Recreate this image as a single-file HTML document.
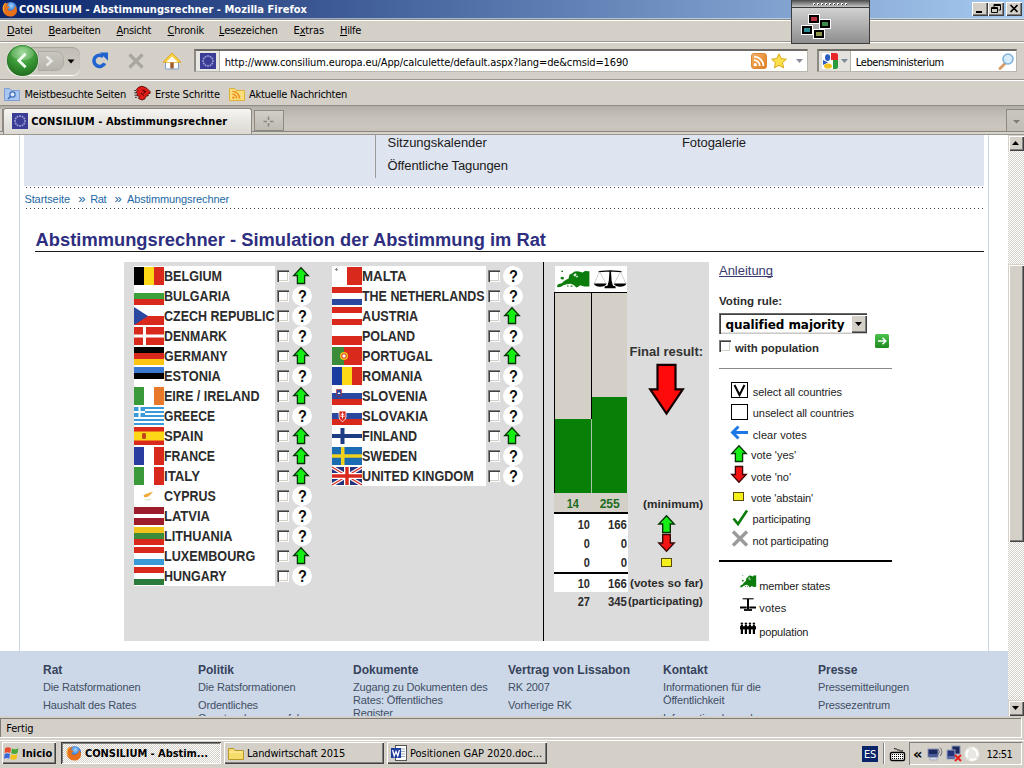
<!DOCTYPE html>
<html lang="de"><head><meta charset="utf-8"><title>CONSILIUM - Abstimmungsrechner - Mozilla Firefox</title>
<style>
*{box-sizing:border-box;margin:0;padding:0}
html,body{width:1024px;height:768px;overflow:hidden;background:#d4d0c8}
body{position:relative;font-family:"Liberation Sans",sans-serif;font-size:12px;color:#000}
.t{position:absolute;white-space:pre;line-height:1}
u{text-decoration:underline}
*{text-decoration-skip-ink:none}
svg{display:block;overflow:visible}
</style></head><body>
<div style="position:absolute;left:0px;top:135px;width:1008px;height:581px;background:#fff"></div>
<div style="position:absolute;left:19px;top:135px;width:1px;height:516px;background:#c9d6e6"></div>
<div style="position:absolute;left:988px;top:135px;width:1px;height:516px;background:#c9d6e6"></div>
<div style="position:absolute;left:24px;top:135px;width:960px;height:51px;background:#dfe5f0"></div>
<div style="position:absolute;left:375px;top:135px;width:1px;height:43px;background:#9c9c9c"></div>
<span class="t" style="left:387.60px;top:135.60px;font-family:'Liberation Sans',sans-serif;font-size:13px;font-weight:400;color:#1a1a1a;letter-spacing:-0.033px;">Sitzungskalender</span>
<span class="t" style="left:387.60px;top:159.40px;font-family:'Liberation Sans',sans-serif;font-size:13px;font-weight:400;color:#1a1a1a;letter-spacing:-0.110px;">Öffentliche Tagungen</span>
<span class="t" style="left:682.00px;top:135.60px;font-family:'Liberation Sans',sans-serif;font-size:13px;font-weight:400;color:#1a1a1a;letter-spacing:-0.095px;">Fotogalerie</span>
<div style="position:absolute;left:26px;top:187px;width:957px;height:1px;background-image:repeating-linear-gradient(90deg,#3a3a3a 0 1px,transparent 1px 4px)"></div>
<div style="position:absolute;left:26px;top:208px;width:957px;height:1px;background-image:repeating-linear-gradient(90deg,#3a3a3a 0 1px,transparent 1px 4px)"></div>
<span class="t" style="left:24.40px;top:193.50px;font-family:'Liberation Sans',sans-serif;font-size:11px;font-weight:400;color:#2268a6;letter-spacing:-0.087px;">Startseite</span>
<span class="t" style="left:78.30px;top:191.50px;font-family:'Liberation Sans',sans-serif;font-size:13px;font-weight:400;color:#2268a6;">»</span>
<span class="t" style="left:90.20px;top:193.50px;font-family:'Liberation Sans',sans-serif;font-size:11px;font-weight:400;color:#2268a6;letter-spacing:-0.375px;">Rat</span>
<span class="t" style="left:114.60px;top:191.50px;font-family:'Liberation Sans',sans-serif;font-size:13px;font-weight:400;color:#2268a6;">»</span>
<span class="t" style="left:127.00px;top:193.50px;font-family:'Liberation Sans',sans-serif;font-size:11px;font-weight:400;color:#2268a6;letter-spacing:-0.108px;">Abstimmungsrechner</span>
<span class="t" style="left:35.60px;top:231.20px;font-family:'Liberation Sans',sans-serif;font-size:18.3px;font-weight:700;color:#2e2e80;letter-spacing:0.022px;">Abstimmungsrechner - Simulation der Abstimmung im Rat</span>
<div style="position:absolute;left:35px;top:251px;width:949px;height:1px;background:#1a1a1a"></div>
<div style="position:absolute;left:124px;top:262px;width:585px;height:379px;background:#dcdcdc"></div>
<div style="position:absolute;left:543px;top:262px;width:1.3px;height:379px;background:#000"></div>
<div style="position:absolute;left:134px;top:266px;width:141px;height:320px;background:#fff"></div>
<svg style="position:absolute;left:134px;top:267px;" width="30" height="18" viewBox="0 0 30 18"><rect width="10" height="18" fill="#000"/><rect x="10" width="10" height="18" fill="#fdd816"/><rect x="20" width="10" height="18" fill="#d9281c"/></svg>
<span class="t" style="left:164.00px;top:268.80px;font-family:'Liberation Sans',sans-serif;font-size:14px;font-weight:700;color:#2c2c2c;transform:scaleX(0.8984);transform-origin:0 50%;">BELGIUM</span>
<div style="position:absolute;left:277px;top:270px;width:12.2px;height:12.2px;background:#fff;box-shadow:inset 1px 1px 0 #808080,inset 2px 2px 0 #404040,inset -1px -1px 0 #fff,inset -2px -2px 0 #d4d0c8"></div>
<svg style="position:absolute;left:293.3px;top:267.2px;" width="16" height="17" viewBox="0 0 16 17"><path d="M8 0.700L15.300 8.500H11.600V16.500H4.400V8.500H0.700Z" fill="#14f014" stroke="#063206" stroke-width="1.300" stroke-linejoin="miter"/></svg>
<svg style="position:absolute;left:134px;top:287px;" width="30" height="18" viewBox="0 0 30 18"><rect width="30" height="6" fill="#fff"/><rect y="6" width="30" height="6" fill="#3aa03a"/><rect y="12" width="30" height="6" fill="#d9281c"/></svg>
<span class="t" style="left:164.00px;top:288.80px;font-family:'Liberation Sans',sans-serif;font-size:14px;font-weight:700;color:#2c2c2c;transform:scaleX(0.8966);transform-origin:0 50%;">BULGARIA</span>
<div style="position:absolute;left:277px;top:290px;width:12.2px;height:12.2px;background:#fff;box-shadow:inset 1px 1px 0 #808080,inset 2px 2px 0 #404040,inset -1px -1px 0 #fff,inset -2px -2px 0 #d4d0c8"></div>
<div style="position:absolute;left:292px;top:286px;width:20px;height:20px;background:#fff;border-radius:50%"></div>
<span class="t" style="left:298.10px;top:287.50px;font-family:'Liberation Sans',sans-serif;font-size:16.5px;font-weight:700;color:#111;transform:scaleX(.88);transform-origin:0 50%;">?</span>
<svg style="position:absolute;left:134px;top:307px;" width="30" height="18" viewBox="0 0 30 18"><rect width="30" height="9" fill="#fff"/><rect y="9" width="30" height="9" fill="#d9281c"/><path d="M0 0L14 9L0 18Z" fill="#2a48a0"/></svg>
<span class="t" style="left:164.00px;top:308.80px;font-family:'Liberation Sans',sans-serif;font-size:14px;font-weight:700;color:#2c2c2c;transform:scaleX(0.8935);transform-origin:0 50%;">CZECH REPUBLIC</span>
<div style="position:absolute;left:277px;top:310px;width:12.2px;height:12.2px;background:#fff;box-shadow:inset 1px 1px 0 #808080,inset 2px 2px 0 #404040,inset -1px -1px 0 #fff,inset -2px -2px 0 #d4d0c8"></div>
<div style="position:absolute;left:292px;top:306px;width:20px;height:20px;background:#fff;border-radius:50%"></div>
<span class="t" style="left:298.10px;top:307.50px;font-family:'Liberation Sans',sans-serif;font-size:16.5px;font-weight:700;color:#111;transform:scaleX(.88);transform-origin:0 50%;">?</span>
<svg style="position:absolute;left:134px;top:327px;" width="30" height="18" viewBox="0 0 30 18"><rect width="30" height="18" fill="#d9281c"/><rect x="9" width="3" height="18" fill="#fff"/><rect y="7.5" width="30" height="3" fill="#fff"/></svg>
<span class="t" style="left:164.00px;top:328.80px;font-family:'Liberation Sans',sans-serif;font-size:14px;font-weight:700;color:#2c2c2c;transform:scaleX(0.8803);transform-origin:0 50%;">DENMARK</span>
<div style="position:absolute;left:277px;top:330px;width:12.2px;height:12.2px;background:#fff;box-shadow:inset 1px 1px 0 #808080,inset 2px 2px 0 #404040,inset -1px -1px 0 #fff,inset -2px -2px 0 #d4d0c8"></div>
<div style="position:absolute;left:292px;top:326px;width:20px;height:20px;background:#fff;border-radius:50%"></div>
<span class="t" style="left:298.10px;top:327.50px;font-family:'Liberation Sans',sans-serif;font-size:16.5px;font-weight:700;color:#111;transform:scaleX(.88);transform-origin:0 50%;">?</span>
<svg style="position:absolute;left:134px;top:347px;" width="30" height="18" viewBox="0 0 30 18"><rect width="30" height="6" fill="#000"/><rect y="6" width="30" height="6" fill="#d9281c"/><rect y="12" width="30" height="6" fill="#fdc412"/></svg>
<span class="t" style="left:164.00px;top:348.80px;font-family:'Liberation Sans',sans-serif;font-size:14px;font-weight:700;color:#2c2c2c;transform:scaleX(0.8873);transform-origin:0 50%;">GERMANY</span>
<div style="position:absolute;left:277px;top:350px;width:12.2px;height:12.2px;background:#fff;box-shadow:inset 1px 1px 0 #808080,inset 2px 2px 0 #404040,inset -1px -1px 0 #fff,inset -2px -2px 0 #d4d0c8"></div>
<svg style="position:absolute;left:293.3px;top:347.2px;" width="16" height="17" viewBox="0 0 16 17"><path d="M8 0.700L15.300 8.500H11.600V16.500H4.400V8.500H0.700Z" fill="#14f014" stroke="#063206" stroke-width="1.300" stroke-linejoin="miter"/></svg>
<svg style="position:absolute;left:134px;top:367px;" width="30" height="18" viewBox="0 0 30 18"><rect width="30" height="6" fill="#3a78d0"/><rect y="6" width="30" height="6" fill="#000"/><rect y="12" width="30" height="6" fill="#fff"/></svg>
<span class="t" style="left:164.00px;top:368.80px;font-family:'Liberation Sans',sans-serif;font-size:14px;font-weight:700;color:#2c2c2c;transform:scaleX(0.9156);transform-origin:0 50%;">ESTONIA</span>
<div style="position:absolute;left:277px;top:370px;width:12.2px;height:12.2px;background:#fff;box-shadow:inset 1px 1px 0 #808080,inset 2px 2px 0 #404040,inset -1px -1px 0 #fff,inset -2px -2px 0 #d4d0c8"></div>
<div style="position:absolute;left:292px;top:366px;width:20px;height:20px;background:#fff;border-radius:50%"></div>
<span class="t" style="left:298.10px;top:367.50px;font-family:'Liberation Sans',sans-serif;font-size:16.5px;font-weight:700;color:#111;transform:scaleX(.88);transform-origin:0 50%;">?</span>
<svg style="position:absolute;left:134px;top:387px;" width="30" height="18" viewBox="0 0 30 18"><rect width="10" height="18" fill="#3a9a3a"/><rect x="10" width="10" height="18" fill="#fff"/><rect x="20" width="10" height="18" fill="#e8782a"/></svg>
<span class="t" style="left:164.00px;top:388.80px;font-family:'Liberation Sans',sans-serif;font-size:14px;font-weight:700;color:#2c2c2c;transform:scaleX(0.8961);transform-origin:0 50%;">EIRE / IRELAND</span>
<div style="position:absolute;left:277px;top:390px;width:12.2px;height:12.2px;background:#fff;box-shadow:inset 1px 1px 0 #808080,inset 2px 2px 0 #404040,inset -1px -1px 0 #fff,inset -2px -2px 0 #d4d0c8"></div>
<svg style="position:absolute;left:293.3px;top:387.2px;" width="16" height="17" viewBox="0 0 16 17"><path d="M8 0.700L15.300 8.500H11.600V16.500H4.400V8.500H0.700Z" fill="#14f014" stroke="#063206" stroke-width="1.300" stroke-linejoin="miter"/></svg>
<svg style="position:absolute;left:134px;top:407px;" width="30" height="18" viewBox="0 0 30 18"><rect width="30" height="18" fill="#3a9ad8"/><rect y="2" width="30" height="2" fill="#fff"/><rect y="6" width="30" height="2" fill="#fff"/><rect y="10" width="30" height="2" fill="#fff"/><rect y="14" width="30" height="2" fill="#fff"/><rect width="11" height="10" fill="#3a9ad8"/><rect x="4.5" width="2" height="10" fill="#fff"/><rect y="4" width="11" height="2" fill="#fff"/></svg>
<span class="t" style="left:164.00px;top:408.80px;font-family:'Liberation Sans',sans-serif;font-size:14px;font-weight:700;color:#2c2c2c;transform:scaleX(0.8626);transform-origin:0 50%;">GREECE</span>
<div style="position:absolute;left:277px;top:410px;width:12.2px;height:12.2px;background:#fff;box-shadow:inset 1px 1px 0 #808080,inset 2px 2px 0 #404040,inset -1px -1px 0 #fff,inset -2px -2px 0 #d4d0c8"></div>
<div style="position:absolute;left:292px;top:406px;width:20px;height:20px;background:#fff;border-radius:50%"></div>
<span class="t" style="left:298.10px;top:407.50px;font-family:'Liberation Sans',sans-serif;font-size:16.5px;font-weight:700;color:#111;transform:scaleX(.88);transform-origin:0 50%;">?</span>
<svg style="position:absolute;left:134px;top:427px;" width="30" height="18" viewBox="0 0 30 18"><rect width="30" height="18" fill="#d9281c"/><rect y="4.5" width="30" height="9" fill="#fdd816"/><rect x="8" y="6" width="4" height="6" rx="1" fill="#b8581c"/><rect x="9" y="7.5" width="2" height="3" fill="#d9281c"/></svg>
<span class="t" style="left:164.00px;top:428.80px;font-family:'Liberation Sans',sans-serif;font-size:14px;font-weight:700;color:#2c2c2c;transform:scaleX(0.9401);transform-origin:0 50%;">SPAIN</span>
<div style="position:absolute;left:277px;top:430px;width:12.2px;height:12.2px;background:#fff;box-shadow:inset 1px 1px 0 #808080,inset 2px 2px 0 #404040,inset -1px -1px 0 #fff,inset -2px -2px 0 #d4d0c8"></div>
<svg style="position:absolute;left:293.3px;top:427.2px;" width="16" height="17" viewBox="0 0 16 17"><path d="M8 0.700L15.300 8.500H11.600V16.500H4.400V8.500H0.700Z" fill="#14f014" stroke="#063206" stroke-width="1.300" stroke-linejoin="miter"/></svg>
<svg style="position:absolute;left:134px;top:447px;" width="30" height="18" viewBox="0 0 30 18"><rect width="10" height="18" fill="#2a3ca0"/><rect x="10" width="10" height="18" fill="#fff"/><rect x="20" width="10" height="18" fill="#d9281c"/></svg>
<span class="t" style="left:164.00px;top:448.80px;font-family:'Liberation Sans',sans-serif;font-size:14px;font-weight:700;color:#2c2c2c;transform:scaleX(0.8741);transform-origin:0 50%;">FRANCE</span>
<div style="position:absolute;left:277px;top:450px;width:12.2px;height:12.2px;background:#fff;box-shadow:inset 1px 1px 0 #808080,inset 2px 2px 0 #404040,inset -1px -1px 0 #fff,inset -2px -2px 0 #d4d0c8"></div>
<svg style="position:absolute;left:293.3px;top:447.2px;" width="16" height="17" viewBox="0 0 16 17"><path d="M8 0.700L15.300 8.500H11.600V16.500H4.400V8.500H0.700Z" fill="#14f014" stroke="#063206" stroke-width="1.300" stroke-linejoin="miter"/></svg>
<svg style="position:absolute;left:134px;top:467px;" width="30" height="18" viewBox="0 0 30 18"><rect width="10" height="18" fill="#3a9a3a"/><rect x="10" width="10" height="18" fill="#fff"/><rect x="20" width="10" height="18" fill="#d9281c"/></svg>
<span class="t" style="left:164.00px;top:468.80px;font-family:'Liberation Sans',sans-serif;font-size:14px;font-weight:700;color:#2c2c2c;transform:scaleX(0.9443);transform-origin:0 50%;">ITALY</span>
<div style="position:absolute;left:277px;top:470px;width:12.2px;height:12.2px;background:#fff;box-shadow:inset 1px 1px 0 #808080,inset 2px 2px 0 #404040,inset -1px -1px 0 #fff,inset -2px -2px 0 #d4d0c8"></div>
<svg style="position:absolute;left:293.3px;top:467.2px;" width="16" height="17" viewBox="0 0 16 17"><path d="M8 0.700L15.300 8.500H11.600V16.500H4.400V8.500H0.700Z" fill="#14f014" stroke="#063206" stroke-width="1.300" stroke-linejoin="miter"/></svg>
<svg style="position:absolute;left:134px;top:487px;" width="30" height="18" viewBox="0 0 30 18"><rect width="30" height="18" fill="#fff"/><path d="M9.5 8.5C11 6.5 14 7 16 5.5L19 5 16.5 7.5C15.5 9.5 12 10.5 10 10Z" fill="#f0a83a"/><path d="M11 12c2 1 4 1 6 0" stroke="#cfe0b8" fill="none"/></svg>
<span class="t" style="left:164.00px;top:488.80px;font-family:'Liberation Sans',sans-serif;font-size:14px;font-weight:700;color:#2c2c2c;transform:scaleX(0.8867);transform-origin:0 50%;">CYPRUS</span>
<div style="position:absolute;left:277px;top:490px;width:12.2px;height:12.2px;background:#fff;box-shadow:inset 1px 1px 0 #808080,inset 2px 2px 0 #404040,inset -1px -1px 0 #fff,inset -2px -2px 0 #d4d0c8"></div>
<div style="position:absolute;left:292px;top:486px;width:20px;height:20px;background:#fff;border-radius:50%"></div>
<span class="t" style="left:298.10px;top:487.50px;font-family:'Liberation Sans',sans-serif;font-size:16.5px;font-weight:700;color:#111;transform:scaleX(.88);transform-origin:0 50%;">?</span>
<svg style="position:absolute;left:134px;top:507px;" width="30" height="18" viewBox="0 0 30 18"><rect width="30" height="18" fill="#9c1c2c"/><rect y="7" width="30" height="4" fill="#fff"/></svg>
<span class="t" style="left:164.00px;top:508.80px;font-family:'Liberation Sans',sans-serif;font-size:14px;font-weight:700;color:#2c2c2c;transform:scaleX(0.9290);transform-origin:0 50%;">LATVIA</span>
<div style="position:absolute;left:277px;top:510px;width:12.2px;height:12.2px;background:#fff;box-shadow:inset 1px 1px 0 #808080,inset 2px 2px 0 #404040,inset -1px -1px 0 #fff,inset -2px -2px 0 #d4d0c8"></div>
<div style="position:absolute;left:292px;top:506px;width:20px;height:20px;background:#fff;border-radius:50%"></div>
<span class="t" style="left:298.10px;top:507.50px;font-family:'Liberation Sans',sans-serif;font-size:16.5px;font-weight:700;color:#111;transform:scaleX(.88);transform-origin:0 50%;">?</span>
<svg style="position:absolute;left:134px;top:527px;" width="30" height="18" viewBox="0 0 30 18"><rect width="30" height="6" fill="#f2c21c"/><rect y="6" width="30" height="6" fill="#3a8c3a"/><rect y="12" width="30" height="6" fill="#d9281c"/></svg>
<span class="t" style="left:164.00px;top:528.80px;font-family:'Liberation Sans',sans-serif;font-size:14px;font-weight:700;color:#2c2c2c;transform:scaleX(0.9080);transform-origin:0 50%;">LITHUANIA</span>
<div style="position:absolute;left:277px;top:530px;width:12.2px;height:12.2px;background:#fff;box-shadow:inset 1px 1px 0 #808080,inset 2px 2px 0 #404040,inset -1px -1px 0 #fff,inset -2px -2px 0 #d4d0c8"></div>
<div style="position:absolute;left:292px;top:526px;width:20px;height:20px;background:#fff;border-radius:50%"></div>
<span class="t" style="left:298.10px;top:527.50px;font-family:'Liberation Sans',sans-serif;font-size:16.5px;font-weight:700;color:#111;transform:scaleX(.88);transform-origin:0 50%;">?</span>
<svg style="position:absolute;left:134px;top:547px;" width="30" height="18" viewBox="0 0 30 18"><rect width="30" height="6" fill="#d9281c"/><rect y="6" width="30" height="6" fill="#fff"/><rect y="12" width="30" height="6" fill="#3a9ad8"/></svg>
<span class="t" style="left:164.00px;top:548.80px;font-family:'Liberation Sans',sans-serif;font-size:14px;font-weight:700;color:#2c2c2c;transform:scaleX(0.9023);transform-origin:0 50%;">LUXEMBOURG</span>
<div style="position:absolute;left:277px;top:550px;width:12.2px;height:12.2px;background:#fff;box-shadow:inset 1px 1px 0 #808080,inset 2px 2px 0 #404040,inset -1px -1px 0 #fff,inset -2px -2px 0 #d4d0c8"></div>
<svg style="position:absolute;left:293.3px;top:547.2px;" width="16" height="17" viewBox="0 0 16 17"><path d="M8 0.700L15.300 8.500H11.600V16.500H4.400V8.500H0.700Z" fill="#14f014" stroke="#063206" stroke-width="1.300" stroke-linejoin="miter"/></svg>
<svg style="position:absolute;left:134px;top:567px;" width="30" height="18" viewBox="0 0 30 18"><rect width="30" height="6" fill="#d9281c"/><rect y="6" width="30" height="6" fill="#fff"/><rect y="12" width="30" height="6" fill="#2a7a3c"/></svg>
<span class="t" style="left:164.00px;top:568.80px;font-family:'Liberation Sans',sans-serif;font-size:14px;font-weight:700;color:#2c2c2c;transform:scaleX(0.8895);transform-origin:0 50%;">HUNGARY</span>
<div style="position:absolute;left:277px;top:570px;width:12.2px;height:12.2px;background:#fff;box-shadow:inset 1px 1px 0 #808080,inset 2px 2px 0 #404040,inset -1px -1px 0 #fff,inset -2px -2px 0 #d4d0c8"></div>
<div style="position:absolute;left:292px;top:566px;width:20px;height:20px;background:#fff;border-radius:50%"></div>
<span class="t" style="left:298.10px;top:567.50px;font-family:'Liberation Sans',sans-serif;font-size:16.5px;font-weight:700;color:#111;transform:scaleX(.88);transform-origin:0 50%;">?</span>
<div style="position:absolute;left:332px;top:266px;width:154px;height:220px;background:#fff"></div>
<svg style="position:absolute;left:332px;top:267px;" width="30" height="18" viewBox="0 0 30 18"><rect width="15" height="18" fill="#fff"/><rect x="15" width="15" height="18" fill="#d9281c"/><path d="M3 2.5h3M4.500 1v3" stroke="#888" stroke-width="1.2"/></svg>
<span class="t" style="left:362.00px;top:268.80px;font-family:'Liberation Sans',sans-serif;font-size:14px;font-weight:700;color:#2c2c2c;transform:scaleX(0.9484);transform-origin:0 50%;">MALTA</span>
<div style="position:absolute;left:488px;top:270px;width:12.2px;height:12.2px;background:#fff;box-shadow:inset 1px 1px 0 #808080,inset 2px 2px 0 #404040,inset -1px -1px 0 #fff,inset -2px -2px 0 #d4d0c8"></div>
<div style="position:absolute;left:502.5px;top:266px;width:20px;height:20px;background:#fff;border-radius:50%"></div>
<span class="t" style="left:508.60px;top:267.50px;font-family:'Liberation Sans',sans-serif;font-size:16.5px;font-weight:700;color:#111;transform:scaleX(.88);transform-origin:0 50%;">?</span>
<svg style="position:absolute;left:332px;top:287px;" width="30" height="18" viewBox="0 0 30 18"><rect width="30" height="6" fill="#d9281c"/><rect y="6" width="30" height="6" fill="#fff"/><rect y="12" width="30" height="6" fill="#2a48a0"/></svg>
<span class="t" style="left:362.00px;top:288.80px;font-family:'Liberation Sans',sans-serif;font-size:14px;font-weight:700;color:#2c2c2c;transform:scaleX(0.8898);transform-origin:0 50%;">THE NETHERLANDS</span>
<div style="position:absolute;left:488px;top:290px;width:12.2px;height:12.2px;background:#fff;box-shadow:inset 1px 1px 0 #808080,inset 2px 2px 0 #404040,inset -1px -1px 0 #fff,inset -2px -2px 0 #d4d0c8"></div>
<div style="position:absolute;left:502.5px;top:286px;width:20px;height:20px;background:#fff;border-radius:50%"></div>
<span class="t" style="left:508.60px;top:287.50px;font-family:'Liberation Sans',sans-serif;font-size:16.5px;font-weight:700;color:#111;transform:scaleX(.88);transform-origin:0 50%;">?</span>
<svg style="position:absolute;left:332px;top:307px;" width="30" height="18" viewBox="0 0 30 18"><rect width="30" height="6" fill="#d9281c"/><rect y="6" width="30" height="6" fill="#fff"/><rect y="12" width="30" height="6" fill="#d9281c"/></svg>
<span class="t" style="left:362.00px;top:308.80px;font-family:'Liberation Sans',sans-serif;font-size:14px;font-weight:700;color:#2c2c2c;transform:scaleX(0.9038);transform-origin:0 50%;">AUSTRIA</span>
<div style="position:absolute;left:488px;top:310px;width:12.2px;height:12.2px;background:#fff;box-shadow:inset 1px 1px 0 #808080,inset 2px 2px 0 #404040,inset -1px -1px 0 #fff,inset -2px -2px 0 #d4d0c8"></div>
<svg style="position:absolute;left:503.8px;top:307.2px;" width="16" height="17" viewBox="0 0 16 17"><path d="M8 0.700L15.300 8.500H11.600V16.500H4.400V8.500H0.700Z" fill="#14f014" stroke="#063206" stroke-width="1.300" stroke-linejoin="miter"/></svg>
<svg style="position:absolute;left:332px;top:327px;" width="30" height="18" viewBox="0 0 30 18"><rect width="30" height="9" fill="#fff"/><rect y="9" width="30" height="9" fill="#d9281c"/></svg>
<span class="t" style="left:362.00px;top:328.80px;font-family:'Liberation Sans',sans-serif;font-size:14px;font-weight:700;color:#2c2c2c;transform:scaleX(0.8964);transform-origin:0 50%;">POLAND</span>
<div style="position:absolute;left:488px;top:330px;width:12.2px;height:12.2px;background:#fff;box-shadow:inset 1px 1px 0 #808080,inset 2px 2px 0 #404040,inset -1px -1px 0 #fff,inset -2px -2px 0 #d4d0c8"></div>
<div style="position:absolute;left:502.5px;top:326px;width:20px;height:20px;background:#fff;border-radius:50%"></div>
<span class="t" style="left:508.60px;top:327.50px;font-family:'Liberation Sans',sans-serif;font-size:16.5px;font-weight:700;color:#111;transform:scaleX(.88);transform-origin:0 50%;">?</span>
<svg style="position:absolute;left:332px;top:347px;" width="30" height="18" viewBox="0 0 30 18"><rect width="12" height="18" fill="#3a8c3a"/><rect x="12" width="18" height="18" fill="#d9281c"/><circle cx="12" cy="9" r="4" fill="#f2c21c"/><circle cx="12" cy="9" r="2.2" fill="#fff" stroke="#d9281c" stroke-width="1"/></svg>
<span class="t" style="left:362.00px;top:348.80px;font-family:'Liberation Sans',sans-serif;font-size:14px;font-weight:700;color:#2c2c2c;transform:scaleX(0.8974);transform-origin:0 50%;">PORTUGAL</span>
<div style="position:absolute;left:488px;top:350px;width:12.2px;height:12.2px;background:#fff;box-shadow:inset 1px 1px 0 #808080,inset 2px 2px 0 #404040,inset -1px -1px 0 #fff,inset -2px -2px 0 #d4d0c8"></div>
<svg style="position:absolute;left:503.8px;top:347.2px;" width="16" height="17" viewBox="0 0 16 17"><path d="M8 0.700L15.300 8.500H11.600V16.500H4.400V8.500H0.700Z" fill="#14f014" stroke="#063206" stroke-width="1.300" stroke-linejoin="miter"/></svg>
<svg style="position:absolute;left:332px;top:367px;" width="30" height="18" viewBox="0 0 30 18"><rect width="10" height="18" fill="#1a3ca0"/><rect x="10" width="10" height="18" fill="#fdd816"/><rect x="20" width="10" height="18" fill="#d9281c"/></svg>
<span class="t" style="left:362.00px;top:368.80px;font-family:'Liberation Sans',sans-serif;font-size:14px;font-weight:700;color:#2c2c2c;transform:scaleX(0.9045);transform-origin:0 50%;">ROMANIA</span>
<div style="position:absolute;left:488px;top:370px;width:12.2px;height:12.2px;background:#fff;box-shadow:inset 1px 1px 0 #808080,inset 2px 2px 0 #404040,inset -1px -1px 0 #fff,inset -2px -2px 0 #d4d0c8"></div>
<div style="position:absolute;left:502.5px;top:366px;width:20px;height:20px;background:#fff;border-radius:50%"></div>
<span class="t" style="left:508.60px;top:367.50px;font-family:'Liberation Sans',sans-serif;font-size:16.5px;font-weight:700;color:#111;transform:scaleX(.88);transform-origin:0 50%;">?</span>
<svg style="position:absolute;left:332px;top:387px;" width="30" height="18" viewBox="0 0 30 18"><rect width="30" height="6" fill="#fff"/><rect y="6" width="30" height="6" fill="#2a48a0"/><rect y="12" width="30" height="6" fill="#d9281c"/><path d="M4.500 2.500h5v4.500c0 2-2.500 3-2.500 3s-2.500-1-2.500-3z" fill="#2a48a0" stroke="#d9281c" stroke-width="0.600"/><path d="M5.500 7l1.500-2 1.500 2z" fill="#fff"/></svg>
<span class="t" style="left:362.00px;top:388.80px;font-family:'Liberation Sans',sans-serif;font-size:14px;font-weight:700;color:#2c2c2c;transform:scaleX(0.9151);transform-origin:0 50%;">SLOVENIA</span>
<div style="position:absolute;left:488px;top:390px;width:12.2px;height:12.2px;background:#fff;box-shadow:inset 1px 1px 0 #808080,inset 2px 2px 0 #404040,inset -1px -1px 0 #fff,inset -2px -2px 0 #d4d0c8"></div>
<div style="position:absolute;left:502.5px;top:386px;width:20px;height:20px;background:#fff;border-radius:50%"></div>
<span class="t" style="left:508.60px;top:387.50px;font-family:'Liberation Sans',sans-serif;font-size:16.5px;font-weight:700;color:#111;transform:scaleX(.88);transform-origin:0 50%;">?</span>
<svg style="position:absolute;left:332px;top:407px;" width="30" height="18" viewBox="0 0 30 18"><rect width="30" height="6" fill="#fff"/><rect y="6" width="30" height="6" fill="#2a48a0"/><rect y="12" width="30" height="6" fill="#d9281c"/><path d="M7 4h7v6c0 3-3.500 4.500-3.500 4.500S7 13 7 10z" fill="#d9281c" stroke="#fff" stroke-width="0.800"/><path d="M10.500 5.500v6M8.800 7.300h3.400M8.300 9.200h4.400" stroke="#fff" stroke-width="0.900"/></svg>
<span class="t" style="left:362.00px;top:408.80px;font-family:'Liberation Sans',sans-serif;font-size:14px;font-weight:700;color:#2c2c2c;transform:scaleX(0.9290);transform-origin:0 50%;">SLOVAKIA</span>
<div style="position:absolute;left:488px;top:410px;width:12.2px;height:12.2px;background:#fff;box-shadow:inset 1px 1px 0 #808080,inset 2px 2px 0 #404040,inset -1px -1px 0 #fff,inset -2px -2px 0 #d4d0c8"></div>
<div style="position:absolute;left:502.5px;top:406px;width:20px;height:20px;background:#fff;border-radius:50%"></div>
<span class="t" style="left:508.60px;top:407.50px;font-family:'Liberation Sans',sans-serif;font-size:16.5px;font-weight:700;color:#111;transform:scaleX(.88);transform-origin:0 50%;">?</span>
<svg style="position:absolute;left:332px;top:427px;" width="30" height="18" viewBox="0 0 30 18"><rect width="30" height="18" fill="#fff"/><rect x="8.500" y="1" width="4" height="16" fill="#1c3c84"/><rect y="7" width="30" height="4" fill="#1c3c84"/></svg>
<span class="t" style="left:362.00px;top:428.80px;font-family:'Liberation Sans',sans-serif;font-size:14px;font-weight:700;color:#2c2c2c;transform:scaleX(0.8952);transform-origin:0 50%;">FINLAND</span>
<div style="position:absolute;left:488px;top:430px;width:12.2px;height:12.2px;background:#fff;box-shadow:inset 1px 1px 0 #808080,inset 2px 2px 0 #404040,inset -1px -1px 0 #fff,inset -2px -2px 0 #d4d0c8"></div>
<svg style="position:absolute;left:503.8px;top:427.2px;" width="16" height="17" viewBox="0 0 16 17"><path d="M8 0.700L15.300 8.500H11.600V16.500H4.400V8.500H0.700Z" fill="#14f014" stroke="#063206" stroke-width="1.300" stroke-linejoin="miter"/></svg>
<svg style="position:absolute;left:332px;top:447px;" width="30" height="18" viewBox="0 0 30 18"><rect width="30" height="18" fill="#1c6cb4"/><rect x="9" width="3.500" height="18" fill="#f4d21c"/><rect y="7.300" width="30" height="3.400" fill="#f4d21c"/></svg>
<span class="t" style="left:362.00px;top:448.80px;font-family:'Liberation Sans',sans-serif;font-size:14px;font-weight:700;color:#2c2c2c;transform:scaleX(0.8950);transform-origin:0 50%;">SWEDEN</span>
<div style="position:absolute;left:488px;top:450px;width:12.2px;height:12.2px;background:#fff;box-shadow:inset 1px 1px 0 #808080,inset 2px 2px 0 #404040,inset -1px -1px 0 #fff,inset -2px -2px 0 #d4d0c8"></div>
<div style="position:absolute;left:502.5px;top:446px;width:20px;height:20px;background:#fff;border-radius:50%"></div>
<span class="t" style="left:508.60px;top:447.50px;font-family:'Liberation Sans',sans-serif;font-size:16.5px;font-weight:700;color:#111;transform:scaleX(.88);transform-origin:0 50%;">?</span>
<svg style="position:absolute;left:332px;top:467px;" width="30" height="18" viewBox="0 0 30 18"><rect width="30" height="18" fill="#24347c"/><path d="M0 0L30 18M30 0L0 18" stroke="#fff" stroke-width="3.600"/><path d="M0 0L30 18M30 0L0 18" stroke="#d9281c" stroke-width="1.200"/><path d="M15 0v18M0 9h30" stroke="#fff" stroke-width="6"/><path d="M15 0v18M0 9h30" stroke="#d9281c" stroke-width="3.400"/></svg>
<span class="t" style="left:362.00px;top:468.80px;font-family:'Liberation Sans',sans-serif;font-size:14px;font-weight:700;color:#2c2c2c;transform:scaleX(0.9036);transform-origin:0 50%;">UNITED KINGDOM</span>
<div style="position:absolute;left:488px;top:470px;width:12.2px;height:12.2px;background:#fff;box-shadow:inset 1px 1px 0 #808080,inset 2px 2px 0 #404040,inset -1px -1px 0 #fff,inset -2px -2px 0 #d4d0c8"></div>
<div style="position:absolute;left:502.5px;top:466px;width:20px;height:20px;background:#fff;border-radius:50%"></div>
<span class="t" style="left:508.60px;top:467.50px;font-family:'Liberation Sans',sans-serif;font-size:16.5px;font-weight:700;color:#111;transform:scaleX(.88);transform-origin:0 50%;">?</span>
<div style="position:absolute;left:555px;top:266px;width:72.4px;height:26px;background:#fff"></div>
<svg style="position:absolute;left:555px;top:266px;" width="73" height="26" viewBox="0 0 73 26"><path d="M34.4 5.2 30.0 5.0 27.6 6.4 22.8 5.2 19.6 5.600 16.800 7.600 14.400 8.800 13.600 12.400 11.600 13.600 8.800 15.200 6.800 17.200 3.600 18.0 1.800 20.0 2.800 21.200 6.0 20.800 8.400 19.200 11.600 18.200 15.600 17.700 18.800 19.0 21.200 21.400 23.600 20.400 25.200 19.200 29.200 20.600 34.400 20.400ZM6.400 4.800 8.0 4.800 8.0 6.0 6.400 6.0ZM5.200 12.0 6.800 10.800 8.800 11.200 8.800 13.200 6.800 13.600ZM12.0 19.500 13.600 19.500 13.600 20.600 12.0 20.600ZM15.600 19.600 17.400 19.600 17.400 20.700 15.600 20.700Z" fill="#0c7c0c"/><path d="M18.400 8.400 20.800 7.200 21.600 8.400 20.0 10.400 18.800 10.0ZM20.400 10.800 22.400 9.600 23.200 10.800 21.600 11.600Z" fill="#e4f0e4"/><path d="M43.600 4.900 55.200 4.200 66.500 4.900 66.500 6.200 55.200 5.500 43.600 6.200ZM54.500 5.200 56.0 5.200 56.600 14.800 57.900 19.500 60.600 20.400 60.600 22.200 49.600 22.200 49.600 20.400 52.600 19.500 53.800 14.800Z" fill="#000"/><path d="M38.700 17.600H51.800C50.800 19.800 48.400 20.800 45.200 20.800S39.700 19.800 38.700 17.600ZM58.700 17.600H71.500C70.500 19.800 68.200 20.800 65.100 20.800S59.700 19.800 58.700 17.600Z" fill="#000"/><path d="M44.600 5.800 39.200 17.600M44.600 5.800 51.0 17.600M65.400 5.800 59.200 17.600M65.400 5.800 71.0 17.600" stroke="#bdbdbd" stroke-width="0.700" fill="none"/></svg>
<div style="position:absolute;left:554px;top:292px;width:73.4px;height:201px;background:#d4d0c8;border-left:1px solid #000;border-top:1px solid #000"></div>
<div style="position:absolute;left:591px;top:292px;width:1px;height:201px;background:#000"></div>
<div style="position:absolute;left:555px;top:419px;width:36px;height:74px;background:#088008"></div>
<div style="position:absolute;left:592px;top:397px;width:35.4px;height:96px;background:#088008"></div>
<div style="position:absolute;left:591px;top:419px;width:1px;height:74px;background:#a8c4a8"></div>
<div style="position:absolute;left:554px;top:493px;width:73.7px;height:19px;background:#d4d0c8"></div>
<div style="position:absolute;left:554px;top:512px;width:73.7px;height:2px;background:#000"></div>
<div style="position:absolute;left:554px;top:514px;width:73.7px;height:78px;background:#fff"></div>
<div style="position:absolute;left:554px;top:572px;width:73.7px;height:2px;background:#000"></div>
<span class="t" style="left:565.39px;top:497.80px;font-family:'Liberation Sans',sans-serif;font-size:12.5px;font-weight:700;color:#1c6c1c;transform:scaleX(.88);transform-origin:100% 50%;">14</span>
<span class="t" style="left:598.64px;top:497.80px;font-family:'Liberation Sans',sans-serif;font-size:12.5px;font-weight:700;color:#1c6c1c;transform:scaleX(.97);transform-origin:100% 50%;">255</span>
<span class="t" style="left:576.09px;top:518.80px;font-family:'Liberation Sans',sans-serif;font-size:12.5px;font-weight:700;color:#2c2c2c;transform:scaleX(.88);transform-origin:100% 50%;">10</span>
<span class="t" style="left:606.34px;top:518.80px;font-family:'Liberation Sans',sans-serif;font-size:12.5px;font-weight:700;color:#2c2c2c;transform:scaleX(.91);transform-origin:100% 50%;">166</span>
<span class="t" style="left:583.05px;top:537.50px;font-family:'Liberation Sans',sans-serif;font-size:12.5px;font-weight:700;color:#2c2c2c;transform:scaleX(.88);transform-origin:100% 50%;">0</span>
<span class="t" style="left:620.25px;top:537.50px;font-family:'Liberation Sans',sans-serif;font-size:12.5px;font-weight:700;color:#2c2c2c;transform:scaleX(.91);transform-origin:100% 50%;">0</span>
<span class="t" style="left:583.05px;top:557.00px;font-family:'Liberation Sans',sans-serif;font-size:12.5px;font-weight:700;color:#2c2c2c;transform:scaleX(.88);transform-origin:100% 50%;">0</span>
<span class="t" style="left:620.25px;top:557.00px;font-family:'Liberation Sans',sans-serif;font-size:12.5px;font-weight:700;color:#2c2c2c;transform:scaleX(.91);transform-origin:100% 50%;">0</span>
<span class="t" style="left:576.09px;top:577.60px;font-family:'Liberation Sans',sans-serif;font-size:12.5px;font-weight:700;color:#2c2c2c;transform:scaleX(.88);transform-origin:100% 50%;">10</span>
<span class="t" style="left:606.34px;top:577.60px;font-family:'Liberation Sans',sans-serif;font-size:12.5px;font-weight:700;color:#2c2c2c;transform:scaleX(.91);transform-origin:100% 50%;">166</span>
<span class="t" style="left:576.09px;top:595.60px;font-family:'Liberation Sans',sans-serif;font-size:12.5px;font-weight:700;color:#2c2c2c;transform:scaleX(.88);transform-origin:100% 50%;">27</span>
<span class="t" style="left:606.34px;top:595.60px;font-family:'Liberation Sans',sans-serif;font-size:12.5px;font-weight:700;color:#2c2c2c;transform:scaleX(.91);transform-origin:100% 50%;">345</span>
<span class="t" style="left:629.50px;top:344.70px;font-family:'Liberation Sans',sans-serif;font-size:13px;font-weight:700;color:#333;letter-spacing:-0.007px;">Final result:</span>
<svg style="position:absolute;left:646px;top:362.8px;" width="41" height="54" viewBox="0 0 41 54"><path d="M11.500 1.800H29.500V26.300H36.800L20.500 50.600L4.200 26.300H11.500Z" fill="#ff0a0a" stroke="#140000" stroke-width="2.200" stroke-linejoin="miter"/></svg>
<span class="t" style="left:642.80px;top:498.70px;font-family:'Liberation Sans',sans-serif;font-size:10.8px;font-weight:700;color:#2c2c2c;transform:scaleX(1.0908);transform-origin:0 50%;">(minimum)</span>
<svg style="position:absolute;left:658px;top:514.5px;" width="17" height="18" viewBox="0 0 16 17"><path d="M8 0.700L15.300 8.500H11.600V16.500H4.400V8.500H0.700Z" fill="#14f014" stroke="#063206" stroke-width="1.300" stroke-linejoin="miter"/></svg>
<svg style="position:absolute;left:658px;top:534px;" width="17" height="18" viewBox="0 0 16 17"><path d="M8 16.300L15.300 8.500H11.600V0.500H4.400V8.500H0.700Z" fill="#f41414" stroke="#3a0606" stroke-width="1.300" stroke-linejoin="miter"/></svg>
<div style="position:absolute;left:661px;top:558px;width:11px;height:9px;background:#f4f01c;border:1px solid #5a4a0a"></div>
<span class="t" style="left:629.80px;top:577.80px;font-family:'Liberation Sans',sans-serif;font-size:10.8px;font-weight:700;color:#2c2c2c;transform:scaleX(1.0797);transform-origin:0 50%;">(votes so far)</span>
<span class="t" style="left:628.20px;top:595.60px;font-family:'Liberation Sans',sans-serif;font-size:10.8px;font-weight:700;color:#2c2c2c;transform:scaleX(1.0391);transform-origin:0 50%;">(participating)</span>
<span class="t" style="left:719.00px;top:264.40px;font-family:'Liberation Sans',sans-serif;font-size:13px;font-weight:400;color:#3a3a70;letter-spacing:-0.024px;text-decoration:underline;text-underline-offset:1px;">Anleitung</span>
<span class="t" style="left:719.00px;top:295.80px;font-family:'Liberation Sans',sans-serif;font-size:10.8px;font-weight:700;color:#2c2c2c;transform:scaleX(1.0678);transform-origin:0 50%;">Voting rule:</span>
<div style="position:absolute;left:719px;top:313px;width:148.4px;height:21px;background:#fff;box-shadow:inset 1px 1px 0 #6a6a6a,inset 2px 2px 0 #404040,inset -1px -1px 0 #c8c8c8,inset -2px -2px 0 #e4e2dc"></div>
<span class="t" style="left:725.40px;top:319.20px;font-family:'DejaVu Sans','Liberation Sans',sans-serif;font-size:12px;font-weight:700;color:#000;letter-spacing:-0.067px;">qualified majority</span>
<div style="position:absolute;left:851px;top:315px;width:16px;height:18px;background:#d4d0c8;box-shadow:inset 1px 1px 0 #fff,inset -1px -1px 0 #404040,inset -2px -2px 0 #808080"></div>
<svg style="position:absolute;left:855px;top:321.5px;" width="7" height="4" viewBox="0 0 7 4"><path d="M0 0h7L3.500 4z" fill="#000"/></svg>
<div style="position:absolute;left:719px;top:340px;width:12px;height:12px;background:#fff;box-shadow:inset 1px 1px 0 #808080,inset 2px 2px 0 #404040,inset -1px -1px 0 #fff,inset -2px -2px 0 #d4d0c8"></div>
<span class="t" style="left:735.00px;top:343.00px;font-family:'Liberation Sans',sans-serif;font-size:10.8px;font-weight:700;color:#2c2c2c;transform:scaleX(1.0531);transform-origin:0 50%;">with population</span>
<svg style="position:absolute;left:875px;top:334px;" width="14" height="14" viewBox="0 0 14 14"><defs><linearGradient id="gog" x1="0" y1="0" x2="0" y2="1"><stop offset="0" stop-color="#4cc24c"/><stop offset="1" stop-color="#1e8a1e"/></linearGradient></defs><rect width="14" height="14" rx="1.500" fill="url(#gog)"/><path d="M3 7h7.500M7.500 3.800L10.800 7L7.500 10.200" stroke="#fff" stroke-width="1.500" fill="none"/></svg>
<div style="position:absolute;left:719px;top:368px;width:173px;height:1px;background:#8a8a8a"></div>
<div style="position:absolute;left:731px;top:382px;width:17px;height:16px;background:#fff;border:1px solid #000"></div>
<svg style="position:absolute;left:733px;top:384px;" width="13" height="12" viewBox="0 0 13 12"><path d="M1.500 1L6.500 11L11.500 1" stroke="#000" stroke-width="2" fill="none"/></svg>
<span class="t" style="left:752.80px;top:386.70px;font-family:'Liberation Sans',sans-serif;font-size:11px;font-weight:400;color:#222;letter-spacing:-0.065px;">select all countries</span>
<div style="position:absolute;left:731px;top:404px;width:17px;height:16px;background:#fff;border:1px solid #000"></div>
<span class="t" style="left:752.80px;top:407.80px;font-family:'Liberation Sans',sans-serif;font-size:11px;font-weight:400;color:#222;letter-spacing:-0.074px;">unselect all countries</span>
<svg style="position:absolute;left:730px;top:425px;" width="19" height="15" viewBox="0 0 19 15"><path d="M18 7.500H3M8.500 1.500L2.500 7.500L8.500 13.500" stroke="#1e78e6" stroke-width="2.900" fill="none"/></svg>
<span class="t" style="left:752.80px;top:429.60px;font-family:'Liberation Sans',sans-serif;font-size:11px;font-weight:400;color:#222;letter-spacing:0.072px;">clear votes</span>
<svg style="position:absolute;left:730.5px;top:445.3px;" width="16" height="17" viewBox="0 0 16 17"><path d="M8 0.700L15.300 8.500H11.600V16.500H4.400V8.500H0.700Z" fill="#14f014" stroke="#063206" stroke-width="1.300" stroke-linejoin="miter"/></svg>
<span class="t" style="left:751.00px;top:450.40px;font-family:'Liberation Sans',sans-serif;font-size:11px;font-weight:400;color:#222;letter-spacing:0.003px;">vote &#x27;yes&#x27;</span>
<svg style="position:absolute;left:730.5px;top:466.3px;" width="16" height="17" viewBox="0 0 16 17"><path d="M8 16.300L15.300 8.500H11.600V0.500H4.400V8.500H0.700Z" fill="#f41414" stroke="#3a0606" stroke-width="1.300" stroke-linejoin="miter"/></svg>
<span class="t" style="left:751.00px;top:471.50px;font-family:'Liberation Sans',sans-serif;font-size:11px;font-weight:400;color:#222;letter-spacing:-0.033px;">vote &#x27;no&#x27;</span>
<div style="position:absolute;left:733px;top:492px;width:11px;height:9px;background:#f4f01c;border:1px solid #5a4a0a"></div>
<span class="t" style="left:751.00px;top:492.70px;font-family:'Liberation Sans',sans-serif;font-size:11px;font-weight:400;color:#222;letter-spacing:-0.109px;">vote &#x27;abstain&#x27;</span>
<svg style="position:absolute;left:732px;top:509px;" width="17" height="17" viewBox="0 0 17 17"><path d="M1.500 9.500L6 15L15 1.500" stroke="#0a7c0a" stroke-width="2.600" fill="none"/></svg>
<span class="t" style="left:752.60px;top:513.70px;font-family:'Liberation Sans',sans-serif;font-size:11px;font-weight:400;color:#222;letter-spacing:-0.102px;">participating</span>
<svg style="position:absolute;left:730.5px;top:530px;" width="18" height="17" viewBox="0 0 18 17"><path d="M2 1.500L16 15.500M16 1.500L2 15.500" stroke="#9a9a9a" stroke-width="3.400" fill="none"/></svg>
<span class="t" style="left:752.60px;top:535.60px;font-family:'Liberation Sans',sans-serif;font-size:11px;font-weight:400;color:#222;letter-spacing:-0.098px;">not participating</span>
<div style="position:absolute;left:719px;top:560px;width:173px;height:2px;background:#000"></div>
<svg style="position:absolute;left:739.8px;top:574.5px;" width="16.5" height="13" viewBox="1.5 4.5 33.5 17.5" preserveAspectRatio="none"><path d="M34.4 5.2 30.0 5.0 27.6 6.4 22.8 5.2 19.6 5.600 16.800 7.600 14.400 8.800 13.600 12.400 11.600 13.600 8.800 15.200 6.800 17.200 3.600 18.0 1.800 20.0 2.800 21.200 6.0 20.800 8.400 19.200 11.600 18.200 15.600 17.700 18.800 19.0 21.200 21.400 23.600 20.400 25.200 19.200 29.200 20.600 34.400 20.400ZM6.400 4.800 8.0 4.800 8.0 6.0 6.400 6.0ZM5.200 12.0 6.800 10.800 8.800 11.200 8.800 13.200 6.800 13.600ZM12.0 19.500 13.600 19.500 13.600 20.600 12.0 20.600ZM15.600 19.600 17.400 19.600 17.400 20.700 15.600 20.700Z" fill="#0c7c0c"/><path d="M18.400 8.400 20.800 7.200 21.600 8.400 20.0 10.400 18.800 10.0ZM20.400 10.800 22.400 9.600 23.200 10.800 21.600 11.600Z" fill="#e4f0e4"/></svg>
<span class="t" style="left:759.30px;top:580.60px;font-family:'Liberation Sans',sans-serif;font-size:11px;font-weight:400;color:#222;letter-spacing:-0.158px;">member states</span>
<svg style="position:absolute;left:740px;top:598px;" width="16" height="13" viewBox="0 0 16 13"><path d="M2.600 0.800h11" stroke="#000" stroke-width="1.100"/><path d="M8 1v10" stroke="#000" stroke-width="2"/><path d="M0 9.600h6.700M9.300 9.600h6.700" stroke="#000" stroke-width="2"/><path d="M4 12h8" stroke="#000" stroke-width="1.800"/></svg>
<span class="t" style="left:759.30px;top:603.20px;font-family:'Liberation Sans',sans-serif;font-size:11px;font-weight:400;color:#222;letter-spacing:0.141px;">votes</span>
<svg style="position:absolute;left:740px;top:621.5px;" width="16" height="12" viewBox="0 0 16 12"><circle cx="1.9" cy="1.600" r="1.200" fill="#000"/><rect x="0.8" y="3" width="2.200" height="9" fill="#000"/><circle cx="5.9" cy="1.600" r="1.200" fill="#000"/><rect x="4.8" y="3" width="2.200" height="9" fill="#000"/><circle cx="9.9" cy="1.600" r="1.200" fill="#000"/><rect x="8.8" y="3" width="2.200" height="9" fill="#000"/><circle cx="13.9" cy="1.600" r="1.200" fill="#000"/><rect x="12.8" y="3" width="2.200" height="9" fill="#000"/><rect x="0" y="4.200" width="16" height="3.200" fill="#000"/></svg>
<span class="t" style="left:759.30px;top:626.60px;font-family:'Liberation Sans',sans-serif;font-size:11px;font-weight:400;color:#222;letter-spacing:-0.178px;">population</span>
<div style="position:absolute;left:0px;top:651px;width:1008px;height:65px;background:#ccd8e8"></div>
<div style="position:absolute;left:0;top:0;width:1008px;height:716px;overflow:hidden">
<span class="t" style="left:43.00px;top:664.00px;font-family:'Liberation Sans',sans-serif;font-size:12px;font-weight:700;color:#36425a;">Rat</span>
<span class="t" style="left:43.00px;top:681.80px;font-family:'Liberation Sans',sans-serif;font-size:11px;font-weight:400;color:#414e64;letter-spacing:-0.15px;">Die Ratsformationen</span>
<span class="t" style="left:43.00px;top:699.70px;font-family:'Liberation Sans',sans-serif;font-size:11px;font-weight:400;color:#414e64;letter-spacing:-0.15px;">Haushalt des Rates</span>
<span class="t" style="left:198.00px;top:664.00px;font-family:'Liberation Sans',sans-serif;font-size:12px;font-weight:700;color:#36425a;">Politik</span>
<span class="t" style="left:198.00px;top:681.80px;font-family:'Liberation Sans',sans-serif;font-size:11px;font-weight:400;color:#414e64;letter-spacing:-0.15px;">Die Ratsformationen</span>
<span class="t" style="left:198.00px;top:699.70px;font-family:'Liberation Sans',sans-serif;font-size:11px;font-weight:400;color:#414e64;letter-spacing:-0.15px;">Ordentliches</span>
<span class="t" style="left:198.00px;top:712.50px;font-family:'Liberation Sans',sans-serif;font-size:11px;font-weight:400;color:#414e64;letter-spacing:-0.15px;">Gesetzgebungsverfahren</span>
<span class="t" style="left:353.00px;top:664.00px;font-family:'Liberation Sans',sans-serif;font-size:12px;font-weight:700;color:#36425a;">Dokumente</span>
<span class="t" style="left:353.00px;top:682.00px;font-family:'Liberation Sans',sans-serif;font-size:11px;font-weight:400;color:#414e64;letter-spacing:-0.15px;">Zugang zu Dokumenten des</span>
<span class="t" style="left:353.00px;top:694.60px;font-family:'Liberation Sans',sans-serif;font-size:11px;font-weight:400;color:#414e64;letter-spacing:-0.15px;">Rates: Öffentliches</span>
<span class="t" style="left:353.00px;top:707.60px;font-family:'Liberation Sans',sans-serif;font-size:11px;font-weight:400;color:#414e64;letter-spacing:-0.15px;">Register</span>
<span class="t" style="left:508.00px;top:664.00px;font-family:'Liberation Sans',sans-serif;font-size:12px;font-weight:700;color:#36425a;">Vertrag von Lissabon</span>
<span class="t" style="left:508.00px;top:681.80px;font-family:'Liberation Sans',sans-serif;font-size:11px;font-weight:400;color:#414e64;letter-spacing:-0.15px;">RK 2007</span>
<span class="t" style="left:508.00px;top:699.70px;font-family:'Liberation Sans',sans-serif;font-size:11px;font-weight:400;color:#414e64;letter-spacing:-0.15px;">Vorherige RK</span>
<span class="t" style="left:663.00px;top:664.00px;font-family:'Liberation Sans',sans-serif;font-size:12px;font-weight:700;color:#36425a;">Kontakt</span>
<span class="t" style="left:663.00px;top:682.00px;font-family:'Liberation Sans',sans-serif;font-size:11px;font-weight:400;color:#414e64;letter-spacing:-0.15px;">Informationen für die</span>
<span class="t" style="left:663.00px;top:694.60px;font-family:'Liberation Sans',sans-serif;font-size:11px;font-weight:400;color:#414e64;letter-spacing:-0.15px;">Öffentlichkeit</span>
<span class="t" style="left:663.00px;top:712.50px;font-family:'Liberation Sans',sans-serif;font-size:11px;font-weight:400;color:#414e64;letter-spacing:-0.15px;">Informationsbesuche</span>
<span class="t" style="left:818.00px;top:664.00px;font-family:'Liberation Sans',sans-serif;font-size:12px;font-weight:700;color:#36425a;">Presse</span>
<span class="t" style="left:818.00px;top:681.80px;font-family:'Liberation Sans',sans-serif;font-size:11px;font-weight:400;color:#414e64;letter-spacing:-0.15px;">Pressemitteilungen</span>
<span class="t" style="left:818.00px;top:699.70px;font-family:'Liberation Sans',sans-serif;font-size:11px;font-weight:400;color:#414e64;letter-spacing:-0.15px;">Pressezentrum</span>
</div>
<div style="position:absolute;left:0px;top:0px;width:1024px;height:18px;background:linear-gradient(90deg,#0a246a 0%,#a6caf0 100%)"></div>
<div style="position:absolute;left:0px;top:18px;width:1024px;height:1px;background:linear-gradient(90deg,#8a98b8 0%,#d0dcec 100%)"></div>
<svg style="position:absolute;left:2px;top:1px;" width="16" height="16" viewBox="0 0 16 16"><defs><radialGradient id="ffg2" cx="55%" cy="30%" r="70%"><stop offset="0" stop-color="#9fd8ff"/><stop offset="0.6" stop-color="#2f6fd0"/><stop offset="1" stop-color="#1c3f9c"/></radialGradient></defs>
<circle cx="8.6" cy="7.4" r="6.4" fill="url(#ffg2)"/>
<path d="M0.800 6.200C1 4 2.400 2.200 4 1.400L3.600 3C4.400 2.200 5.800 1.800 7 2 5.600 2.800 5 4 5.200 5.200 6 5 7 5.400 7.600 6.200 7 6.800 6.400 7 5.600 7.400 5.600 8.600 6.400 9.600 7.800 9.800 9.600 10 11.400 9 12.400 7.600 12.800 6.600 12.800 5.400 12.400 4.400 13.800 5.400 15 7.200 15 9.400 15 12.800 12 15.600 8.200 15.600 4.200 15.600 0.900 12.600 0.800 8.600 0.750 7.800 0.700 7 0.800 6.200Z" fill="#e8701a"/>
<path d="M0.800 6.200C1 4 2.400 2.200 4 1.400L3.600 3C2.600 4 2 5.400 1.800 7.200 1.700 9 2.400 11 4 12.600 2 11.400 0.850 9.600 0.800 8.600Z" fill="#f7b23c"/></svg>
<span class="t" style="left:19.00px;top:4.00px;font-family:'DejaVu Sans Condensed','Liberation Sans',sans-serif;font-size:11px;font-weight:700;color:#fff;letter-spacing:0.038px;">CONSILIUM - Abstimmungsrechner - Mozilla Firefox</span>
<div style="position:absolute;left:972px;top:2px;width:16px;height:14px;box-shadow:inset 1px 1px 0 #fff,inset -1px -1px 0 #404040,inset -2px -2px 0 #808080;background:#d4d0c8;"><div style="position:absolute;left:4px;top:9px;width:6px;height:2px;background:#000"></div></div>
<div style="position:absolute;left:988px;top:2px;width:16px;height:14px;box-shadow:inset 1px 1px 0 #fff,inset -1px -1px 0 #404040,inset -2px -2px 0 #808080;background:#d4d0c8;"><svg style="position:absolute;left:3px;top:2px;" width="10" height="9" viewBox="0 0 10 9"><path d="M3 0.5h6.5v5.5h-2M3 1.5h6.5M3 0.5v2.5M0.5 3.5h6v5h-6zM0.5 4.5h6" stroke="#000" fill="none" stroke-width="1"/></svg></div>
<div style="position:absolute;left:1006px;top:2px;width:16px;height:14px;box-shadow:inset 1px 1px 0 #fff,inset -1px -1px 0 #404040,inset -2px -2px 0 #808080;background:#d4d0c8;"><svg style="position:absolute;left:4px;top:3px;" width="8" height="7" viewBox="0 0 8 7"><path d="M0.5 0L7.5 7M7.5 0L0.5 7" stroke="#000" stroke-width="1.7" fill="none"/></svg></div>
<div style="position:absolute;left:0px;top:19px;width:1024px;height:1px;background:#858a82"></div>
<div style="position:absolute;left:0px;top:20px;width:1024px;height:1px;background:#fff"></div>
<span class="t" style="left:7.00px;top:25.00px;font-family:'DejaVu Sans Condensed','Liberation Sans',sans-serif;font-size:11px;font-weight:400;color:#000;letter-spacing:-0.181px;"><u>D</u>atei</span>
<span class="t" style="left:48.50px;top:25.00px;font-family:'DejaVu Sans Condensed','Liberation Sans',sans-serif;font-size:11px;font-weight:400;color:#000;letter-spacing:-0.239px;"><u>B</u>earbeiten</span>
<span class="t" style="left:116.50px;top:25.00px;font-family:'DejaVu Sans Condensed','Liberation Sans',sans-serif;font-size:11px;font-weight:400;color:#000;letter-spacing:-0.292px;"><u>A</u>nsicht</span>
<span class="t" style="left:167.50px;top:25.00px;font-family:'DejaVu Sans Condensed','Liberation Sans',sans-serif;font-size:11px;font-weight:400;color:#000;letter-spacing:-0.190px;"><u>C</u>hronik</span>
<span class="t" style="left:219.00px;top:25.00px;font-family:'DejaVu Sans Condensed','Liberation Sans',sans-serif;font-size:11px;font-weight:400;color:#000;letter-spacing:-0.207px;"><u>L</u>esezeichen</span>
<span class="t" style="left:293.50px;top:25.00px;font-family:'DejaVu Sans Condensed','Liberation Sans',sans-serif;font-size:11px;font-weight:400;color:#000;letter-spacing:-0.130px;">E<u>x</u>tras</span>
<span class="t" style="left:340.00px;top:25.00px;font-family:'DejaVu Sans Condensed','Liberation Sans',sans-serif;font-size:11px;font-weight:400;color:#000;letter-spacing:-0.303px;"><u>H</u>ilfe</span>
<div style="position:absolute;left:0px;top:41px;width:1024px;height:1px;background:#9a968f"></div>
<div style="position:absolute;left:0px;top:42px;width:1024px;height:1px;background:#fff"></div>
<div style="position:absolute;left:6px;top:47px;width:74px;height:27.5px;border-radius:14px 8px 8px 14px;background:linear-gradient(180deg,#c2beb6,#cfccc4);box-shadow:0 1px 0 #fff,inset 0 1px 1px #a8a49b"></div>
<div style="position:absolute;left:38px;top:51px;width:26px;height:20px;border-radius:0 8px 8px 0;background:linear-gradient(180deg,#c9c6bf,#b6b3ab);border:1px solid #aeaba3"></div>
<svg style="position:absolute;left:44px;top:55px;" width="10" height="12" viewBox="0 0 10 12"><path d="M2.5 1.5L7.5 6L2.5 10.5" stroke="#eceae6" stroke-width="2.4" fill="none"/></svg>
<svg style="position:absolute;left:67px;top:59px;" width="8" height="5" viewBox="0 0 8 5"><path d="M0.5 0.5h7L4 4.5z" fill="#000"/></svg>
<svg style="position:absolute;left:5.5px;top:44.3px;" width="33" height="33" viewBox="0 0 33 33"><defs><radialGradient id="bkg" cx="50%" cy="25%" r="80%"><stop offset="0" stop-color="#8fd48a"/><stop offset="0.45" stop-color="#3f9e3a"/><stop offset="1" stop-color="#1d6a1c"/></radialGradient></defs>
<circle cx="16.500" cy="16.500" r="16.300" fill="#e9f0e4" opacity="0.800"/><circle cx="16.500" cy="16.500" r="15.600" fill="#2a6e28"/><circle cx="16.5" cy="16.5" r="15" fill="url(#bkg)"/>
<ellipse cx="16.5" cy="9.5" rx="11.5" ry="6.5" fill="#fff" opacity="0.18"/>
<path d="M19.600 9.800L12.800 16.500L19.600 23.200" stroke="#f4fff4" stroke-width="2.800" fill="none" stroke-linejoin="miter"/></svg>
<svg style="position:absolute;left:90px;top:51px;" width="20" height="20" viewBox="0 0 20 20"><path d="M14.6 12.2A5.6 5.6 0 1 1 13.2 5.6" stroke="#2264cf" stroke-width="3.600" fill="none"/><path d="M9.800 1.600L18 1.600L18 9.800Z" fill="#2264cf"/></svg>
<svg style="position:absolute;left:127px;top:52px;" width="18" height="18" viewBox="0 0 18 18"><path d="M2.5 2.5L15.5 15.5M15.5 2.5L2.5 15.5" stroke="#a9a69e" stroke-width="3.2" fill="none"/></svg>
<svg style="position:absolute;left:162px;top:52px;" width="20" height="18" viewBox="0 0 20 18"><path d="M3.5 9.5h13v7.5h-13z" fill="#fff" stroke="#7aa0cc" stroke-width="1"/><path d="M10 1L19 10.2H1Z" fill="#f8d24a" stroke="#e0a820" stroke-width="1" stroke-linejoin="round"/><path d="M10 4.5L15.5 10H4.5Z" fill="#fff"/><rect x="8.3" y="10.5" width="3.4" height="6" fill="#a05a2a"/></svg>
<div style="position:absolute;left:194px;top:49px;width:614px;height:23px;background:#fff;border:1px solid #b9b6ae;border-top:2px solid #6e6c67;border-left:2px solid #8c8a84"></div>
<div style="position:absolute;left:196px;top:51px;width:24px;height:20px;background:#e9e7e2;border-right:1px solid #b5b2aa"></div>
<svg style="position:absolute;left:200px;top:53px;" width="16" height="16" viewBox="0 0 16 16"><rect width="16" height="16" fill="#3a3c96"/><circle cx="8.0" cy="3.0" r="1" fill="#9c9cd6"/><circle cx="10.5" cy="3.7" r="1" fill="#9c9cd6"/><circle cx="12.3" cy="5.5" r="1" fill="#9c9cd6"/><circle cx="13.0" cy="8.0" r="1" fill="#9c9cd6"/><circle cx="12.3" cy="10.5" r="1" fill="#9c9cd6"/><circle cx="10.5" cy="12.3" r="1" fill="#9c9cd6"/><circle cx="8.0" cy="13.0" r="1" fill="#9c9cd6"/><circle cx="5.5" cy="12.3" r="1" fill="#9c9cd6"/><circle cx="3.7" cy="10.5" r="1" fill="#9c9cd6"/><circle cx="3.0" cy="8.0" r="1" fill="#9c9cd6"/><circle cx="3.7" cy="5.5" r="1" fill="#9c9cd6"/><circle cx="5.5" cy="3.7" r="1" fill="#9c9cd6"/></svg>
<span class="t" style="left:224.70px;top:57.00px;font-family:'DejaVu Sans Condensed','Liberation Sans',sans-serif;font-size:11px;font-weight:400;color:#000;letter-spacing:-0.138px;">http://www.consilium.europa.eu/App/calculette/default.aspx?lang=de&amp;cmsid=1690</span>
<svg style="position:absolute;left:751px;top:53px;" width="16" height="16" viewBox="0 0 16 16"><defs><linearGradient id="rsg" x1="0" y1="0" x2="1" y2="1"><stop offset="0" stop-color="#f6b36a"/><stop offset="1" stop-color="#e07a1a"/></linearGradient></defs><rect x="0.5" y="0.5" width="15" height="15" rx="2.5" fill="url(#rsg)" stroke="#d88a3a"/><circle cx="4.3" cy="11.7" r="1.6" fill="#fff"/><path d="M3 7.2A5.8 5.8 0 0 1 8.8 13M3 3.6A9.4 9.4 0 0 1 12.4 13" stroke="#fff" stroke-width="1.8" fill="none"/></svg>
<svg style="position:absolute;left:771px;top:53px;" width="16" height="16" viewBox="0 0 16 16"><path d="M8 0.8L10.2 5.6L15.4 6.2L11.5 9.7L12.6 14.9L8 12.3L3.4 14.9L4.5 9.7L0.6 6.2L5.8 5.6Z" fill="#fbe04a" stroke="#d9a81a" stroke-width="1" stroke-linejoin="round"/></svg>
<svg style="position:absolute;left:796px;top:59px;" width="7" height="4" viewBox="0 0 7 4"><path d="M0 0h7L3.5 4z" fill="#8c8c98"/></svg>
<div style="position:absolute;left:817px;top:49px;width:200px;height:23px;background:#fff;border:1px solid #b9b6ae;border-top:2px solid #6e6c67;border-left:2px solid #8c8a84"></div>
<div style="position:absolute;left:819px;top:51px;width:32px;height:20px;background:#e4e2dc;border-right:1px solid #b5b2aa"></div>
<svg style="position:absolute;left:822px;top:53px;" width="16" height="16" viewBox="0 0 16 16"><rect x="0" y="0" width="16" height="16" rx="1" fill="#fff"/><path d="M9 0h5a2 2 0 0 1 2 2v5H9z" fill="#e8262a"/><path d="M11 7h5v7a2 2 0 0 1-2 2h-3z" fill="#2a9a3c"/><ellipse cx="5.6" cy="4.6" rx="2.6" ry="3.4" fill="#2a5cc0"/><path d="M1 7L6 9.5L1 12z" fill="#2a5cc0"/><ellipse cx="6" cy="13" rx="4" ry="2.6" fill="#f2c21a"/></svg>
<svg style="position:absolute;left:841px;top:59px;" width="7" height="4" viewBox="0 0 7 4"><path d="M0 0h7L3.5 4z" fill="#7a8a98"/></svg>
<span class="t" style="left:855.80px;top:57.00px;font-family:'DejaVu Sans Condensed','Liberation Sans',sans-serif;font-size:11px;font-weight:400;color:#000;letter-spacing:-0.381px;">Lebensministerium</span>
<svg style="position:absolute;left:997px;top:52px;" width="18" height="18" viewBox="0 0 18 18"><path d="M9 10.5L3 16.5" stroke="#d9a06a" stroke-width="3" stroke-linecap="round"/><circle cx="11" cy="7" r="5" fill="#d6ecfb" stroke="#7fb2dc" stroke-width="1.6"/></svg>
<div style="position:absolute;left:0px;top:79px;width:1024px;height:1px;background:#9a968f"></div>
<div style="position:absolute;left:0px;top:80px;width:1024px;height:1px;background:#fff"></div>
<svg style="position:absolute;left:4px;top:85.5px;" width="16" height="15" viewBox="0 0 16 15"><path d="M0.5 2.5h5l1.5 2h8.5v10h-15z" fill="#a9c6f0" stroke="#7d9fd6"/><circle cx="8.5" cy="8.5" r="2.6" fill="#dcebfb" stroke="#3f6fc0" stroke-width="1.2"/><path d="M6.6 10.4L4 13" stroke="#3f6fc0" stroke-width="1.5"/></svg>
<span class="t" style="left:24.50px;top:89.00px;font-family:'DejaVu Sans Condensed','Liberation Sans',sans-serif;font-size:11px;font-weight:400;color:#000;letter-spacing:-0.246px;">Meistbesuchte Seiten</span>
<svg style="position:absolute;left:134px;top:85px;" width="17" height="16" viewBox="0 0 17 16"><path d="M2.500 4.500C4 2 7 0.800 9.500 1.600L13 3.400L16 6.400L16.200 8.200L13.400 9.400L14.400 10.600L11.600 11.400L11 13.800L8 15L4.600 13.600L5.400 11.200L2.600 10.600L3.600 8.600L1.800 7.400L3.400 6Z" fill="#e01c18" stroke="#5a0a0a" stroke-width="0.900" stroke-linejoin="round"/><path d="M8.500 5.200L11.600 6.400L9.600 8.200M7 8.200L9.800 10.400" stroke="#4a0606" stroke-width="1.100" fill="none"/><path d="M0.300 5.500h1.800M0.300 7.800h2M0.500 10.200h1.800M1 12.400h1.800" stroke="#222" stroke-width="0.900"/></svg>
<span class="t" style="left:155.00px;top:89.00px;font-family:'DejaVu Sans Condensed','Liberation Sans',sans-serif;font-size:11px;font-weight:400;color:#000;letter-spacing:-0.161px;">Erste Schritte</span>
<svg style="position:absolute;left:229px;top:86px;" width="16" height="15" viewBox="0 0 16 15"><path d="M0.5 2.5h5l1.5 2h8.5v10h-15z" fill="#f9de7a" stroke="#dcb03a"/><circle cx="4.4" cy="11.6" r="1.2" fill="#f08a1a"/><path d="M3.4 8.2A4.4 4.4 0 0 1 7.8 12.6M3.4 5.4A7.2 7.2 0 0 1 10.6 12.6" stroke="#f08a1a" stroke-width="1.4" fill="none"/></svg>
<span class="t" style="left:249.00px;top:89.00px;font-family:'DejaVu Sans Condensed','Liberation Sans',sans-serif;font-size:11px;font-weight:400;color:#000;letter-spacing:-0.272px;">Aktuelle Nachrichten</span>
<div style="position:absolute;left:0px;top:105px;width:1024px;height:27px;background:linear-gradient(180deg,#aeaaa1 0,#b9b5ac 14%,#c6c2ba 50%,#cbc7bf 85%,#c4c0b8 100%)"></div>
<div style="position:absolute;left:0px;top:105px;width:1024px;height:1px;background:#8f8c85"></div>
<div style="position:absolute;left:0px;top:131px;width:1024px;height:1px;background:#8a877f"></div>
<div style="position:absolute;left:0px;top:132px;width:1024px;height:2px;background:#d6d3cc"></div>
<div style="position:absolute;left:0px;top:134px;width:1024px;height:1px;background:#9a968e"></div>
<div style="position:absolute;left:0px;top:109px;width:3px;height:23px;background:#d4d0c8;border-right:1px solid #8c8982;border-bottom:1px solid #8c8982"></div>
<div style="position:absolute;left:3px;top:108px;width:249px;height:26px;background:linear-gradient(180deg,#f6f5f2,#e6e4df 55%,#dcd9d3);border:1px solid #8c8982;border-bottom:none;border-radius:3px 3px 0 0"></div>
<svg style="position:absolute;left:12px;top:113px;" width="16" height="16" viewBox="0 0 16 16"><rect width="16" height="16" fill="#3a3c96"/><circle cx="8.0" cy="3.0" r="1" fill="#9c9cd6"/><circle cx="10.5" cy="3.7" r="1" fill="#9c9cd6"/><circle cx="12.3" cy="5.5" r="1" fill="#9c9cd6"/><circle cx="13.0" cy="8.0" r="1" fill="#9c9cd6"/><circle cx="12.3" cy="10.5" r="1" fill="#9c9cd6"/><circle cx="10.5" cy="12.3" r="1" fill="#9c9cd6"/><circle cx="8.0" cy="13.0" r="1" fill="#9c9cd6"/><circle cx="5.5" cy="12.3" r="1" fill="#9c9cd6"/><circle cx="3.7" cy="10.5" r="1" fill="#9c9cd6"/><circle cx="3.0" cy="8.0" r="1" fill="#9c9cd6"/><circle cx="3.7" cy="5.5" r="1" fill="#9c9cd6"/><circle cx="5.5" cy="3.7" r="1" fill="#9c9cd6"/></svg>
<span class="t" style="left:31.20px;top:116.20px;font-family:'DejaVu Sans Condensed','Liberation Sans',sans-serif;font-size:11px;font-weight:700;color:#000;letter-spacing:0.092px;">CONSILIUM - Abstimmungsrechner</span>
<div style="position:absolute;left:254px;top:110px;width:30px;height:21px;background:linear-gradient(180deg,#d2cfc8,#bebab2);border:1px solid #8c8982"></div>
<svg style="position:absolute;left:263px;top:116px;" width="11" height="11" viewBox="0 0 11 11"><path d="M5.5 0.5v10M0.5 5.5h10" stroke="#8a877f" stroke-width="1.6"/><rect x="4" y="4" width="3" height="3" fill="#c8c5be"/></svg>
<div style="position:absolute;left:1006px;top:109px;width:18px;height:22px;background:linear-gradient(180deg,#c9c6bf,#c2beb6);border:1px solid #8c8982;border-right:none;border-bottom:none"></div>
<svg style="position:absolute;left:1013px;top:119.5px;" width="7" height="3.5" viewBox="0 0 7 3.5"><path d="M0 0h7L3.500 3.500z" fill="#7c7a74"/></svg>
<div style="position:absolute;left:791px;top:0px;width:79px;height:44px;background:linear-gradient(180deg,#d8d8d8 0,#d0d0d0 20%,#8e8e8e 100%);border:1px solid #3c3c3c;border-top:none"></div>
<div style="position:absolute;left:792px;top:0px;width:77px;height:8px;background:linear-gradient(180deg,#4a4a4a,#c8c8c8);border-bottom:1px solid #3c3c3c"></div>
<svg style="position:absolute;left:813px;top:1px;" width="36" height="6" viewBox="0 0 36 6"><rect x="0" y="2" width="2" height="2" fill="#fff"/><rect x="1" y="3" width="1" height="1" fill="#222"/><rect x="4" y="2" width="2" height="2" fill="#fff"/><rect x="5" y="3" width="1" height="1" fill="#222"/><rect x="8" y="2" width="2" height="2" fill="#fff"/><rect x="9" y="3" width="1" height="1" fill="#222"/><rect x="12" y="2" width="2" height="2" fill="#fff"/><rect x="13" y="3" width="1" height="1" fill="#222"/><rect x="16" y="2" width="2" height="2" fill="#fff"/><rect x="17" y="3" width="1" height="1" fill="#222"/><rect x="20" y="2" width="2" height="2" fill="#fff"/><rect x="21" y="3" width="1" height="1" fill="#222"/><rect x="24" y="2" width="2" height="2" fill="#fff"/><rect x="25" y="3" width="1" height="1" fill="#222"/><rect x="28" y="2" width="2" height="2" fill="#fff"/><rect x="29" y="3" width="1" height="1" fill="#222"/><rect x="32" y="2" width="2" height="2" fill="#fff"/><rect x="33" y="3" width="1" height="1" fill="#222"/></svg>
<svg style="position:absolute;left:800px;top:13px;" width="34" height="27" viewBox="0 0 34 27"><rect x="8" y="1" width="12" height="10" fill="#fff"/><rect x="9" y="2" width="10" height="8" fill="#000"/><rect x="11" y="4" width="6" height="4" fill="#b83040"/><rect x="19" y="6" width="12" height="10" fill="#fff"/><rect x="20" y="7" width="10" height="8" fill="#000"/><rect x="22" y="9" width="6" height="4" fill="#3c8c48"/><rect x="1" y="12" width="12" height="10" fill="#fff"/><rect x="2" y="13" width="10" height="8" fill="#000"/><rect x="4" y="15" width="6" height="4" fill="#2c8c98"/><rect x="13" y="16" width="12" height="10" fill="#fff"/><rect x="14" y="17" width="10" height="8" fill="#000"/><rect x="16" y="19" width="6" height="4" fill="#8c9448"/></svg>
<div style="position:absolute;left:1008px;top:135px;width:16px;height:581px;background:#ece9e2;background-image:repeating-conic-gradient(#fff 0 25%,#d4d0c8 0 50%);background-size:2px 2px"></div>
<div style="position:absolute;left:1008px;top:135px;width:16px;height:16px;box-shadow:inset 1px 1px 0 #d4d0c8,inset 2px 2px 0 #fff,inset -1px -1px 0 #404040,inset -2px -2px 0 #808080;background:#d4d0c8;"><svg style="position:absolute;left:4px;top:6px;" width="7" height="4" viewBox="0 0 7 4"><path d="M0 4h7L3.5 0z" fill="#000"/></svg></div>
<div style="position:absolute;left:1008px;top:700px;width:16px;height:16px;box-shadow:inset 1px 1px 0 #d4d0c8,inset 2px 2px 0 #fff,inset -1px -1px 0 #404040,inset -2px -2px 0 #808080;background:#d4d0c8;"><svg style="position:absolute;left:4px;top:6px;" width="7" height="4" viewBox="0 0 7 4"><path d="M0 0h7L3.5 4z" fill="#000"/></svg></div>
<div style="position:absolute;left:1008px;top:264px;width:16px;height:278px;box-shadow:inset 1px 1px 0 #d4d0c8,inset 2px 2px 0 #fff,inset -1px -1px 0 #404040,inset -2px -2px 0 #808080;background:#d4d0c8;"></div>
<div style="position:absolute;left:0px;top:716px;width:1024px;height:24px;background:#d4d0c8"></div>
<div style="position:absolute;left:0px;top:715.5px;width:1008px;height:1.5px;background:linear-gradient(180deg,#ccd2da,#d4d0c8)"></div>
<div style="position:absolute;left:0px;top:718px;width:1021px;height:1px;background:#7f7c75"></div>
<div style="position:absolute;left:0px;top:719px;width:1px;height:18px;background:#7f7c75"></div>
<div style="position:absolute;left:0px;top:737px;width:1022px;height:1px;background:#fff"></div>
<div style="position:absolute;left:1021px;top:718px;width:1px;height:20px;background:#fff"></div>
<span class="t" style="left:6.30px;top:722.60px;font-family:'DejaVu Sans Condensed','Liberation Sans',sans-serif;font-size:11px;font-weight:400;color:#000;letter-spacing:-0.195px;">Fertig</span>
<div style="position:absolute;left:0px;top:740px;width:1024px;height:28px;background:#d4d0c8"></div>
<div style="position:absolute;left:0px;top:740px;width:1024px;height:1px;background:#fff"></div>
<div style="position:absolute;left:2px;top:742px;width:54px;height:22px;box-shadow:inset 1px 1px 0 #fff,inset -1px -1px 0 #404040,inset -2px -2px 0 #808080;background:#d4d0c8;"><svg style="position:absolute;left:2px;top:3px;" width="16" height="16" viewBox="0 0 16 16"><path d="M1 3.2C3 2 5 2 7 3.2L6.2 8C4.4 7 2.6 7 0.6 8Z" fill="#e84a2a"/><path d="M8 3.4C10 4.6 12 4.4 14.4 3.2L13.6 8C11.6 9.2 9.4 9.2 7.2 8.2Z" fill="#4aa83a"/><path d="M0.6 9C2.6 8 4.4 8 6 9L5.2 13.8C3.6 12.8 1.8 12.8 0 13.8Z" fill="#3a6ad8"/><path d="M7 9.2C9.2 10.2 11.4 10.2 13.4 9L12.6 13.8C10.6 15 8.4 15 6.2 14Z" fill="#f2c21a"/></svg><span class="t" style="left:20.00px;top:5.50px;font-family:'DejaVu Sans Condensed','Liberation Sans',sans-serif;font-size:11px;font-weight:700;color:#000;letter-spacing:0.005px;">Inicio</span></div>
<div style="position:absolute;left:61px;top:742px;width:160px;height:22px;box-shadow:inset 1px 1px 0 #404040,inset -1px -1px 0 #fff,inset 2px 2px 0 #808080;background:#d4d0c8;background:#fff;background-image:repeating-conic-gradient(#fff 0 25%,#d4d0c8 0 50%);background-size:2px 2px;"><svg style="position:absolute;left:5px;top:3px;" width="16" height="16" viewBox="0 0 16 16"><defs><radialGradient id="ffgt" cx="55%" cy="30%" r="70%"><stop offset="0" stop-color="#9fd8ff"/><stop offset="0.6" stop-color="#2f6fd0"/><stop offset="1" stop-color="#1c3f9c"/></radialGradient></defs>
<circle cx="8.6" cy="7.4" r="6.4" fill="url(#ffgt)"/>
<path d="M0.800 6.200C1 4 2.400 2.200 4 1.400L3.600 3C4.400 2.200 5.800 1.800 7 2 5.600 2.800 5 4 5.200 5.200 6 5 7 5.400 7.600 6.200 7 6.800 6.400 7 5.600 7.400 5.600 8.600 6.400 9.600 7.800 9.800 9.600 10 11.400 9 12.400 7.600 12.800 6.600 12.800 5.400 12.400 4.400 13.800 5.400 15 7.200 15 9.400 15 12.800 12 15.600 8.200 15.600 4.200 15.600 0.900 12.600 0.800 8.600 0.750 7.800 0.700 7 0.800 6.200Z" fill="#e8701a"/>
<path d="M0.800 6.200C1 4 2.400 2.200 4 1.400L3.600 3C2.600 4 2 5.400 1.800 7.200 1.700 9 2.400 11 4 12.600 2 11.400 0.850 9.600 0.800 8.600Z" fill="#f7b23c"/></svg><span class="t" style="left:24.00px;top:5.50px;font-family:'DejaVu Sans Condensed','Liberation Sans',sans-serif;font-size:11px;font-weight:700;color:#000;letter-spacing:-0.047px;">CONSILIUM - Abstim...</span></div>
<div style="position:absolute;left:224px;top:742px;width:160px;height:22px;box-shadow:inset 1px 1px 0 #fff,inset -1px -1px 0 #404040,inset -2px -2px 0 #808080;background:#d4d0c8;"><svg style="position:absolute;left:4px;top:3px;" width="16" height="16" viewBox="0 0 16 16"><path d="M0.5 3.5h5l1.5 2h8.5v9h-15z" fill="#f6dc6a" stroke="#b8962a"/><path d="M1 7h14" stroke="#fff3b0"/></svg><span class="t" style="left:23.00px;top:5.50px;font-family:'DejaVu Sans Condensed','Liberation Sans',sans-serif;font-size:11px;font-weight:400;color:#000;letter-spacing:-0.176px;">Landwirtschaft 2015</span></div>
<div style="position:absolute;left:387px;top:742px;width:160px;height:22px;box-shadow:inset 1px 1px 0 #fff,inset -1px -1px 0 #404040,inset -2px -2px 0 #808080;background:#d4d0c8;"><svg style="position:absolute;left:4px;top:3px;" width="16" height="16" viewBox="0 0 16 16"><rect x="4.5" y="0.5" width="11" height="15" fill="#fff" stroke="#555"/><path d="M7 4h7M7 6.5h7M7 9h7M7 11.5h7" stroke="#9ab"/><rect x="0" y="3" width="10" height="10" fill="#1c3a9c"/><path d="M1.6 5L3.2 11L5 6.5L6.8 11L8.4 5" stroke="#fff" stroke-width="1.3" fill="none"/></svg><span class="t" style="left:23.00px;top:5.50px;font-family:'DejaVu Sans Condensed','Liberation Sans',sans-serif;font-size:11px;font-weight:400;color:#000;letter-spacing:-0.041px;">Positionen GAP 2020.doc...</span></div>
<div style="position:absolute;left:862px;top:746px;width:16px;height:16px;background:#0a246a"></div>
<span class="t" style="left:864.00px;top:749.00px;font-family:'DejaVu Sans Condensed','Liberation Sans',sans-serif;font-size:11px;font-weight:400;color:#fff;letter-spacing:-0.273px;">ES</span>
<div style="position:absolute;left:883px;top:743px;width:1px;height:21px;background:#808080"></div>
<div style="position:absolute;left:884px;top:743px;width:1px;height:21px;background:#fff"></div>
<svg style="position:absolute;left:890px;top:747px;" width="16" height="16" viewBox="0 0 16 16"><path d="M4 1c1 2 2 0 3 1.5s2-0.5 3 1 2-0.5 3 0.5" stroke="#000" fill="none"/><rect x="0.5" y="5.5" width="14" height="8" rx="1.5" fill="#fff" stroke="#000" stroke-width="1.4"/><rect x="2" y="7" width="1" height="1" fill="#000"/><rect x="2" y="9" width="1" height="1" fill="#000"/><rect x="2" y="11" width="1" height="1" fill="#000"/><rect x="4" y="7" width="1" height="1" fill="#000"/><rect x="4" y="9" width="1" height="1" fill="#000"/><rect x="4" y="11" width="1" height="1" fill="#000"/><rect x="6" y="7" width="1" height="1" fill="#000"/><rect x="6" y="9" width="1" height="1" fill="#000"/><rect x="6" y="11" width="1" height="1" fill="#000"/><rect x="8" y="7" width="1" height="1" fill="#000"/><rect x="8" y="9" width="1" height="1" fill="#000"/><rect x="8" y="11" width="1" height="1" fill="#000"/><rect x="10" y="7" width="1" height="1" fill="#000"/><rect x="10" y="9" width="1" height="1" fill="#000"/><rect x="10" y="11" width="1" height="1" fill="#000"/><rect x="12" y="7" width="1" height="1" fill="#000"/><rect x="12" y="9" width="1" height="1" fill="#000"/><rect x="12" y="11" width="1" height="1" fill="#000"/></svg>
<div style="position:absolute;left:909px;top:742px;width:113px;height:23px;box-shadow:inset 1px 1px 0 #808080,inset -1px -1px 0 #fff"></div>
<span class="t" style="left:913.00px;top:747.00px;font-family:'DejaVu Sans','Liberation Sans',sans-serif;font-size:14px;font-weight:700;color:#000;transform:scaleX(1.0501);transform-origin:0 50%;">«</span>
<svg style="position:absolute;left:927px;top:746px;" width="16" height="16" viewBox="0 0 16 16"><rect x="1" y="3" width="10" height="8" fill="#1c2860" stroke="#8a96b4"/><rect x="2" y="8" width="8" height="2.500" fill="#4a5a9a"/><rect x="3" y="11.500" width="7" height="2.500" fill="#d4dcec" stroke="#8a96b4" stroke-width="0.600"/><path d="M11 3c1.5 1.5 1.5 4 0 5.5M13 1.5c2.4 2.4 2.4 6 0 8.5" stroke="#667" fill="none"/></svg>
<svg style="position:absolute;left:946px;top:745px;" width="17" height="17" viewBox="0 0 17 17"><rect x="6" y="1" width="8" height="8" fill="#1c2860" stroke="#8a96b4"/><rect x="1" y="5" width="8" height="9" fill="#24327a" stroke="#9aa6c4"/><rect x="2" y="11" width="6" height="2" fill="#5a6aaa"/><path d="M9 10l6 6M15 10l-6 6" stroke="#e8201c" stroke-width="2"/></svg>
<svg style="position:absolute;left:964px;top:746px;" width="16" height="16" viewBox="0 0 16 16"><circle cx="8" cy="8" r="7.5" fill="#e9e7e2"/><path d="M8 2.5a5.5 5.5 0 0 1 5 7.5M3.5 11a5.500 5.500 0 0 1 1-7M6 13.2a5.500 5.500 0 0 0 6-1" stroke="#fff" stroke-width="2.2" fill="none"/></svg>
<span class="t" style="left:986.40px;top:748.60px;font-family:'DejaVu Sans Condensed','Liberation Sans',sans-serif;font-size:11px;font-weight:400;color:#000;letter-spacing:-0.503px;">12:51</span>
</body></html>
